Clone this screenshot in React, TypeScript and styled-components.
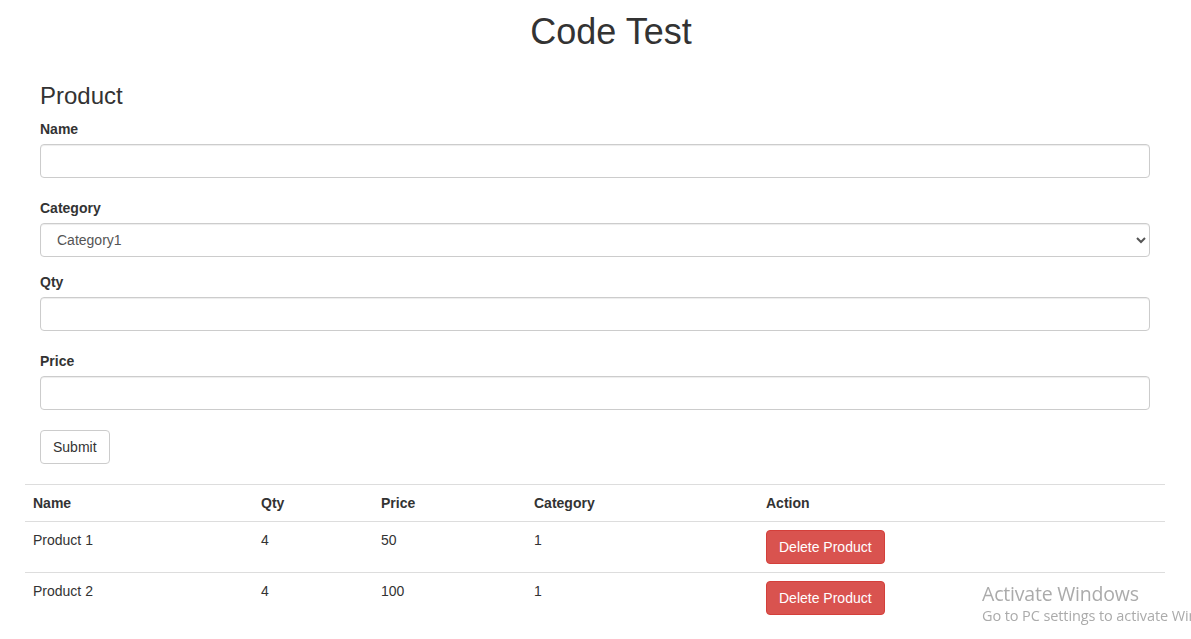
import React from "react";
import styled, { createGlobalStyle } from "styled-components";

const GlobalStyle = createGlobalStyle`
  * { box-sizing: border-box; }
  html, body { margin: 0; padding: 0; background: #fff; overflow: hidden; }
  body {
    font-family: "Liberation Sans", Arial, Helvetica, sans-serif;
    font-size: 14px;
    line-height: 1.42857143;
    color: #333;
  }
`;

const Page = styled.div`
  width: 1170px;
  margin: 0 0 0 10px;
  padding: 0 15px;
`;

const Title = styled.h1`
  margin: 12px 0 0;
  padding-left: 32px;
  font-size: 36px;
  font-weight: 500;
  line-height: 1.1;
  text-align: center;
  color: #333;
`;

const FormPanel = styled.form`
  padding: 0 15px;
`;

const SectionHeading = styled.h3`
  margin: 31px 0 10px;
  font-size: 24px;
  font-weight: 500;
  line-height: 1.1;
  color: #333;
`;

const FormGroup = styled.div<{ $gap: number }>`
  margin-bottom: ${(p) => p.$gap}px;
`;

const Label = styled.label`
  display: block;
  margin-bottom: 5px;
  font-weight: 700;
  line-height: 20px;
`;

const controlStyles = `
  display: block;
  width: 100%;
  height: 34px;
  padding: 6px 12px;
  font-family: "Liberation Sans", Arial, Helvetica, sans-serif;
  font-size: 14px;
  line-height: 1.42857143;
  color: #555;
  background-color: #fff;
  border: 1px solid #ccc;
  border-radius: 4px;
  box-shadow: inset 0 1px 1px rgba(0, 0, 0, 0.075);
  outline: none;
`;

const Input = styled.input`
  ${controlStyles}
`;

const Select = styled.select`
  ${controlStyles}
`;

const Button = styled.button<{ $variant?: "default" | "danger" }>`
  display: inline-block;
  height: 34px;
  padding: 6px 12px;
  font-family: "Liberation Sans", Arial, Helvetica, sans-serif;
  font-size: 14px;
  line-height: 1.42857143;
  border-radius: 4px;
  cursor: pointer;
  color: ${(p) => (p.$variant === "danger" ? "#fff" : "#333")};
  background-color: ${(p) => (p.$variant === "danger" ? "#d9534f" : "#fff")};
  border: 1px solid ${(p) => (p.$variant === "danger" ? "#d43f3a" : "#ccc")};
`;

const Table = styled.table`
  width: 100%;
  margin-top: 20px;
  border-collapse: collapse;
  border-spacing: 0;
`;

const Th = styled.th<{ $w?: number }>`
  width: ${(p) => (p.$w ? `${p.$w}px` : "auto")};
  padding: 8px;
  text-align: left;
  vertical-align: bottom;
  font-weight: 700;
  line-height: 20px;
  border-top: 1px solid #ddd;
  border-bottom: 1px solid #ddd;
`;

const Td = styled.td`
  padding: 8px;
  vertical-align: top;
  line-height: 20px;
  border-top: 1px solid #ddd;
`;

const Watermark = styled.div`
  position: fixed;
  left: 982px;
  top: 582px;
  white-space: nowrap;
  font-family: "Open Sans", "Noto Sans", sans-serif;
  color: #ababab;
  pointer-events: none;
`;

const WatermarkTitle = styled.div`
  font-size: 19.5px;
  line-height: 24px;
  letter-spacing: -0.2px;
`;

const WatermarkSub = styled.div`
  font-size: 14.5px;
  line-height: 20px;
  letter-spacing: -0.1px;
`;

const products = [
  { name: "Product 1", qty: 4, price: 50, category: 1 },
  { name: "Product 2", qty: 4, price: 100, category: 1 },
];

export default function App() {
  return (
    <>
      <GlobalStyle />
      <Page>
        <Title>Code Test</Title>
        <FormPanel onSubmit={(e) => e.preventDefault()}>
          <SectionHeading>Product</SectionHeading>
          <FormGroup $gap={20}>
            <Label>Name</Label>
            <Input type="text" />
          </FormGroup>
          <FormGroup $gap={15}>
            <Label>Category</Label>
            <Select defaultValue="Category1">
              <option>Category1</option>
              <option>Category2</option>
            </Select>
          </FormGroup>
          <FormGroup $gap={20}>
            <Label>Qty</Label>
            <Input type="text" />
          </FormGroup>
          <FormGroup $gap={20}>
            <Label>Price</Label>
            <Input type="text" />
          </FormGroup>
          <Button type="submit">Submit</Button>
        </FormPanel>
        <Table>
          <thead>
            <tr>
              <Th $w={228}>Name</Th>
              <Th $w={120}>Qty</Th>
              <Th $w={153}>Price</Th>
              <Th $w={232}>Category</Th>
              <Th>Action</Th>
            </tr>
          </thead>
          <tbody>
            {products.map((p) => (
              <tr key={p.name}>
                <Td>{p.name}</Td>
                <Td>{p.qty}</Td>
                <Td>{p.price}</Td>
                <Td>{p.category}</Td>
                <Td>
                  <Button $variant="danger" type="button">
                    Delete Product
                  </Button>
                </Td>
              </tr>
            ))}
          </tbody>
        </Table>
      </Page>
      <Watermark>
        <WatermarkTitle>Activate Windows</WatermarkTitle>
        <WatermarkSub>Go to PC settings to activate Windows.</WatermarkSub>
      </Watermark>
    </>
  );
}
